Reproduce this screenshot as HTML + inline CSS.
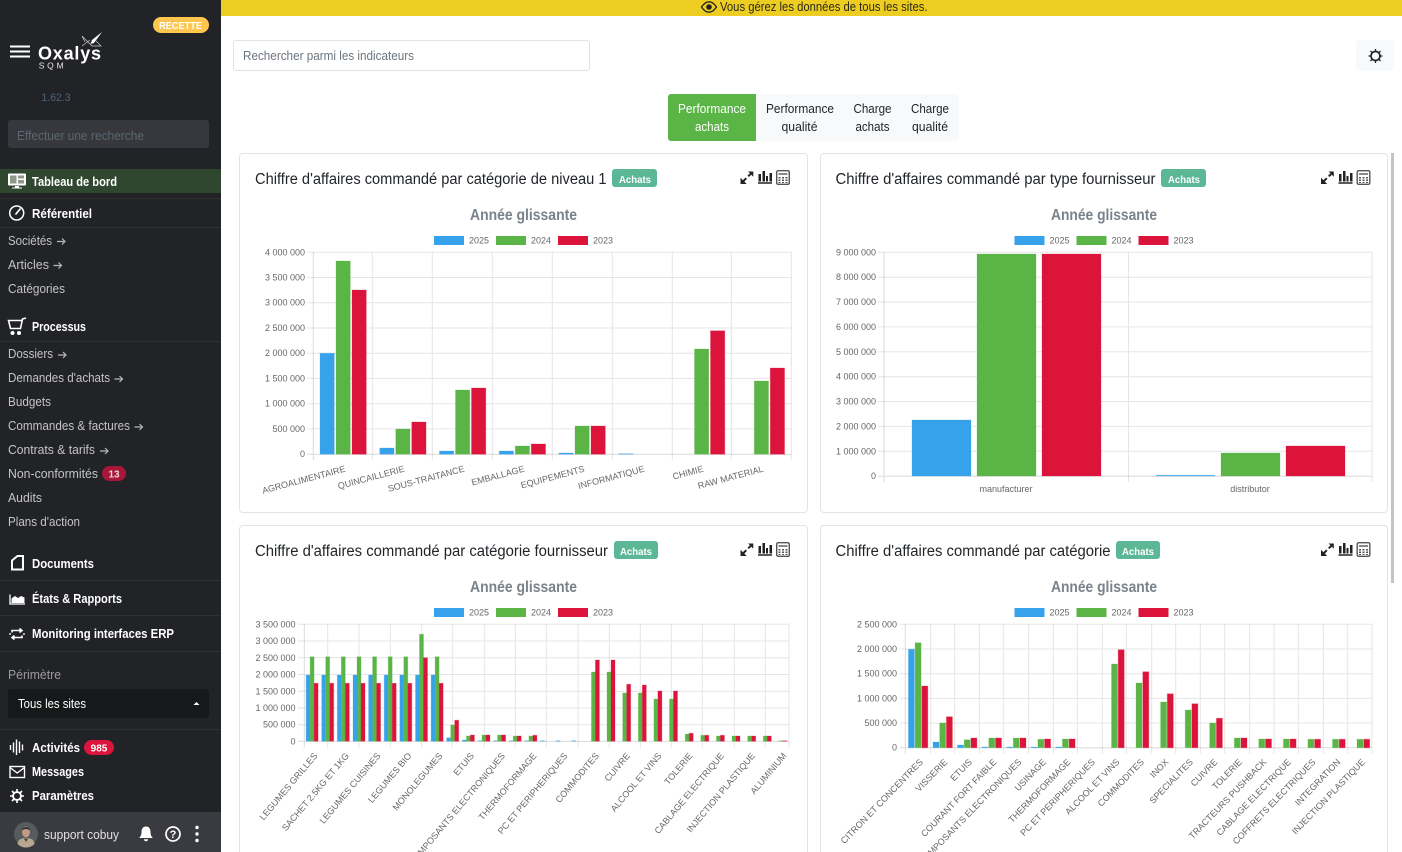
<!DOCTYPE html>
<html lang="fr"><head><meta charset="utf-8"><title>Oxalys SQM</title>
<style>
html,body{margin:0;padding:0;width:1402px;height:852px;overflow:hidden;background:#fff}
body{position:relative;font-family:"Liberation Sans",sans-serif}
.b{position:absolute;box-sizing:border-box}
svg{position:absolute;left:0;top:0}
.ct text{font-size:9px;fill:#666}
.e{text-anchor:end}
.gr{stroke:rgba(0,0,0,.1);stroke-width:1;fill:none}
.ax{stroke:rgba(0,0,0,.14);stroke-width:1;fill:none}
.bl{fill:#36a2eb;stroke:#36a2eb;stroke-opacity:.25;stroke-width:1}
.gn{fill:#5ab546;stroke:#5ab546;stroke-opacity:.25;stroke-width:1}
.rd{fill:#dc143c;stroke:#dc143c;stroke-opacity:.25;stroke-width:1}
.t{font-size:15.5px;fill:#212529}
.tb{font-size:10px;font-weight:bold;fill:#fff}
.st{font-size:16px;font-weight:bold;fill:#7a828b}
.h{font-size:12.5px;font-weight:bold;fill:#fff}
.i{font-size:12.5px;fill:#c4c4c4}
.tab{font-size:12.5px;fill:#212529}
.wi{stroke:#fff;fill:none}
</style></head><body>
<div class="b" style="left:0;top:0;width:221px;height:852px;background:#222327"></div>
<div class="b" style="left:221px;top:0;width:1181px;height:16px;background:#eecd22"></div>
<div class="b" style="left:153px;top:17px;width:56px;height:16px;background:#ffc64f;border-radius:8px"></div>
<div class="b" style="left:8px;top:120px;width:201px;height:28px;background:#37383e;border-radius:3px"></div>
<div class="b" style="left:0;top:169px;width:221px;height:24px;background:#2f472e"></div>
<div class="b" style="left:8px;top:689px;width:201px;height:29px;background:#17181a;border-radius:3px"></div>
<div class="b" style="left:0;top:812px;width:221px;height:40px;background:#3a3b40"></div>
<div class="b" style="left:233px;top:40px;width:357px;height:31px;border:1px solid #dfe3e7;border-radius:3px;background:#fff"></div>
<div class="b" style="left:1356px;top:40px;width:38px;height:31px;background:#f8f9fa;border-radius:4px"></div>
<div class="b" style="left:668px;top:94px;width:291px;height:47px;background:#f8f9fa;border-radius:3px"></div>
<div class="b" style="left:668px;top:94px;width:88px;height:47px;background:#5ab546;border-radius:3px 0 0 3px"></div>
<div class="b" style="left:239px;top:153px;width:569px;height:360px;border:1px solid #e2e4e7;border-radius:4px"></div>
<div class="b" style="left:820px;top:153px;width:568px;height:360px;border:1px solid #e2e4e7;border-radius:4px"></div>
<div class="b" style="left:239px;top:525px;width:569px;height:360px;border:1px solid #e2e4e7;border-radius:4px"></div>
<div class="b" style="left:820px;top:525px;width:568px;height:360px;border:1px solid #e2e4e7;border-radius:4px"></div>
<div class="b" style="left:1391px;top:153px;width:3px;height:430px;background:#c4c4c4"></div>
<div class="b" style="left:612px;top:169px;width:45px;height:18px;background:#5bb796;border-radius:3px"></div>
<div class="b" style="left:1161px;top:169px;width:45px;height:18px;background:#5bb796;border-radius:3px"></div>
<div class="b" style="left:614px;top:541px;width:44px;height:18px;background:#5bb796;border-radius:3px"></div>
<div class="b" style="left:1116px;top:541px;width:44px;height:18px;background:#5bb796;border-radius:3px"></div>

<svg width="1402" height="852" viewBox="0 0 1402 852" xmlns="http://www.w3.org/2000/svg">
<defs>
<path id="ar" d="M0 0H8M5 -3L8 0L5 3" fill="none" stroke="#b9b9b9" stroke-width="1.2"/>
<g id="ic">
<path d="M740.500 184V177.800L746.700 184ZM753.300 171.500V176.700L748.100 171.500Z" fill="#222"/>
<path d="M743.500 181L746.300 178.200M748.200 176.300L750.700 174" stroke="#222" stroke-width="2"/>
<path d="M758 183H772" stroke="#222" stroke-width="1.500"/>
<path d="M758.500 174h2.500v7.500h-2.500zM762.500 171h2.500v10.500h-2.500zM766 176h2v5.500h-2zM769.500 173h2.500v8.500h-2.500z" fill="#222"/>
<rect x="776.700" y="170.700" width="12.600" height="13.600" rx="1.500" fill="#fff" stroke="#555" stroke-width="1.400"/>
<path d="M778.500 173h9v2h-9z" fill="#888"/>
<path d="M778.500 177h2v1.500h-2zM782 177h2v1.500h-2zM785.500 177h2v1.500h-2zM778.500 179.500h2v1.500h-2zM782 179.500h2v1.500h-2zM785.500 179.500h2v1.500h-2zM778.500 182h2v1h-2zM782 182h2v1h-2zM785.500 182h2v1h-2z" fill="#555"/>
</g>
</defs>

<!-- Banner -->
<path d="M701.500 7C704 3.300 706.500 1.800 709 1.800S714 3.300 716.500 7C714 10.700 711.500 12.200 709 12.200S704 10.700 701.500 7Z" fill="none" stroke="#222" stroke-width="1.300"/>
<circle cx="709" cy="7" r="2.800" fill="#222"/>
<text x="720" y="11" font-size="12.500" fill="#2a2a1a" textLength="207.500" lengthAdjust="spacingAndGlyphs">Vous gérez les données de tous les sites.</text>

<!-- Logo -->
<text x="159" y="29" font-size="10" font-weight="bold" fill="#fff" textLength="43" lengthAdjust="spacingAndGlyphs">RECETTE</text>
<path d="M10 46.500H30M10 51.500H30M10 56.500H30" stroke="#fff" stroke-width="2"/>
<text x="38" y="59.500" font-size="18" font-weight="bold" fill="#fff" textLength="63" lengthAdjust="spacing">Oxalys</text>
<text x="38.700" y="68.300" font-size="8.500" fill="#e8e8e8" textLength="25" lengthAdjust="spacing">SQM</text>
<path d="M102 32L92 40L90.500 44L94 43Z" fill="#fff"/>
<path d="M82 36L92 46H101L96 41M82 46L90 40M82 36L85 42" fill="none" stroke="#cfcfcf" stroke-width=".7"/>
<text x="41.500" y="101" font-size="11" fill="#4f6378" textLength="29" lengthAdjust="spacingAndGlyphs">1.62.3</text>
<text x="17" y="140" font-size="12.500" fill="#5c6670" textLength="127" lengthAdjust="spacingAndGlyphs">Effectuer une recherche</text>

<!-- Sidebar separators -->
<path d="M0 198.500H221M0 227.500H221M0 341.500H221M0 580.500H221M0 615.500H221M0 651.500H221M0 729.500H221" stroke="#2f3034" stroke-width="1"/>

<!-- Sidebar icons -->
<rect x="8" y="173.500" width="18" height="12" rx="1" fill="#fff"/>
<path d="M10 175.500h6.500v8h-6.500zM18 175.500h6v3h-6zM18 180h6v3.500h-6z" fill="#8d9a8b"/>
<path d="M15 186h4v1.500h3v1h-10v-1h3z" fill="#fff"/>
<circle cx="16.700" cy="213" r="7" fill="none" stroke="#fff" stroke-width="1.500"/>
<path d="M15.500 214.500L20.500 208.500" stroke="#fff" stroke-width="1.700"/>
<path d="M26 318L22.500 319L20.500 328.500H10.500L8.500 320.500H21.500" fill="none" stroke="#fff" stroke-width="1.600"/>
<circle cx="12.500" cy="333" r="2" fill="#fff"/><circle cx="19" cy="333" r="2" fill="#fff"/>
<path d="M12 569.500V560.500L17.500 556H23V569.500Z" fill="none" stroke="#fff" stroke-width="2"/>
<path d="M10 594.500V604H25" fill="none" stroke="#fff" stroke-width="1.300"/>
<path d="M11.500 603V598.500L15 596L18 598L21 596L24.500 597.500V603Z" fill="#fff"/>
<path d="M12 632.500V630.500H21.500M19.500 628.500L22 630.500L19.500 632.500M22 635.500V637.500H12.500M14.500 635.500L12 637.500L14.500 639.500" fill="none" stroke="#fff" stroke-width="1.600"/>
<path d="M9 634H11M23 634H25" stroke="#fff" stroke-width="1.200"/>
<path d="M10.500 745V750M13.500 742.500V752.500M16.500 739.500V755M19.500 741.500V753M22.500 744.500V750.500" stroke="#fff" stroke-width="1.400"/>
<rect x="10" y="766.500" width="14.500" height="11" fill="none" stroke="#fff" stroke-width="1.400"/>
<path d="M10 767.500L17.200 773L24.500 767.500" fill="none" stroke="#fff" stroke-width="1.400"/>
<circle cx="17" cy="796" r="4" fill="none" stroke="#fff" stroke-width="1.800"/>
<path d="M17 789V803M10 796H24M12 791L22 801M22 791L12 801" stroke="#fff" stroke-width="1.600"/>
<circle cx="17" cy="796" r="3" fill="#222327"/>

<!-- Sidebar text -->
<text class="h" x="32" y="186" textLength="85" lengthAdjust="spacingAndGlyphs">Tableau de bord</text>
<text class="h" x="32" y="218" textLength="60" lengthAdjust="spacingAndGlyphs">Référentiel</text>
<text class="i" x="8" y="245" textLength="44" lengthAdjust="spacingAndGlyphs">Sociétés</text>
<use href="#ar" x="57" y="241.500"/>
<text class="i" x="8" y="269" textLength="41" lengthAdjust="spacingAndGlyphs">Articles</text>
<use href="#ar" x="53.500" y="265.500"/>
<text class="i" x="8" y="293" textLength="57" lengthAdjust="spacingAndGlyphs">Catégories</text>
<text class="h" x="32" y="331" textLength="54" lengthAdjust="spacingAndGlyphs">Processus</text>
<text class="i" x="8" y="358" textLength="45" lengthAdjust="spacingAndGlyphs">Dossiers</text>
<use href="#ar" x="58" y="355"/>
<text class="i" x="8" y="382" textLength="102" lengthAdjust="spacingAndGlyphs">Demandes d'achats</text>
<use href="#ar" x="114.500" y="379"/>
<text class="i" x="8" y="406" textLength="43" lengthAdjust="spacingAndGlyphs">Budgets</text>
<text class="i" x="8" y="430" textLength="122" lengthAdjust="spacingAndGlyphs">Commandes &amp; factures</text>
<use href="#ar" x="134.500" y="427"/>
<text class="i" x="8" y="454" textLength="87" lengthAdjust="spacingAndGlyphs">Contrats &amp; tarifs</text>
<use href="#ar" x="100" y="451"/>
<text class="i" x="8" y="478" textLength="90" lengthAdjust="spacingAndGlyphs">Non-conformités</text>
<rect x="102" y="466" width="24" height="15" rx="7.500" fill="#a81638"/>
<text x="114" y="477.500" font-size="10" font-weight="bold" fill="#f0d8dc" text-anchor="middle">13</text>
<text class="i" x="8" y="502" textLength="34" lengthAdjust="spacingAndGlyphs">Audits</text>
<text class="i" x="8" y="526" textLength="72" lengthAdjust="spacingAndGlyphs">Plans d'action</text>
<text class="h" x="32" y="568" textLength="62" lengthAdjust="spacingAndGlyphs">Documents</text>
<text class="h" x="32" y="603" textLength="90" lengthAdjust="spacingAndGlyphs">États &amp; Rapports</text>
<text class="h" x="32" y="638" textLength="142" lengthAdjust="spacingAndGlyphs">Monitoring interfaces ERP</text>
<text x="8" y="679" font-size="12.500" fill="#9b9b9b" textLength="53" lengthAdjust="spacingAndGlyphs">Périmètre</text>
<text x="18" y="708" font-size="12.500" fill="#fff" textLength="68" lengthAdjust="spacingAndGlyphs">Tous les sites</text>
<path d="M193.500 705L196.500 702L199.500 705Z" fill="#fff"/>
<text class="h" x="32" y="752" textLength="48" lengthAdjust="spacingAndGlyphs">Activités</text>
<rect x="84" y="740" width="30" height="15" rx="7.500" fill="#dc143c"/>
<text x="99" y="751.500" font-size="10" font-weight="bold" fill="#fff" text-anchor="middle">985</text>
<text class="h" x="32" y="776" textLength="52" lengthAdjust="spacingAndGlyphs">Messages</text>
<text class="h" x="32" y="800" textLength="62" lengthAdjust="spacingAndGlyphs">Paramètres</text>

<!-- Footer -->
<circle cx="26" cy="834" r="12" fill="#565b5e"/>
<path d="M17.500 844C18 839 22 838 26 838S34 839 34.500 844A12 12 0 0 1 17.500 844Z" fill="#b9a88e"/>
<ellipse cx="26" cy="832" rx="4" ry="5.500" fill="#c09a83"/>
<path d="M22 830.500C21.500 826 30.500 826 30 830.500C28 828.500 24 828.500 22 830.500Z" fill="#2f2d2c"/>
<path d="M24 838.500L26 842L28 838.500Z" fill="#3a3d42"/>
<text x="44" y="839" font-size="12.500" fill="#e2e2e2" textLength="75" lengthAdjust="spacingAndGlyphs">support cobuy</text>
<path d="M146 826.500C149.500 826.500 150.500 829.500 150.500 832C150.500 835 151.500 836.500 152.800 838H139.200C140.500 836.500 141.500 835 141.500 832C141.500 829.500 142.500 826.500 146 826.500Z" fill="#fff"/>
<path d="M144 839.200H148A2 2 0 0 1 144 839.200Z" fill="#fff"/>
<circle cx="173" cy="834" r="7" fill="none" stroke="#fff" stroke-width="1.700"/>
<text x="173" y="838" font-size="11" font-weight="bold" fill="#fff" text-anchor="middle">?</text>
<circle cx="197" cy="827.500" r="1.700" fill="#fff"/><circle cx="197" cy="834" r="1.700" fill="#fff"/><circle cx="197" cy="840.500" r="1.700" fill="#fff"/>

<!-- Top -->
<text x="243" y="60" font-size="12.500" fill="#6c757d" textLength="171" lengthAdjust="spacingAndGlyphs">Rechercher parmi les indicateurs</text>
<circle cx="1375.500" cy="56" r="4.500" fill="none" stroke="#212529" stroke-width="1.700"/>
<path d="M1375.500 49V51.500M1375.500 60.500V63M1368.500 56H1371M1380 56H1382.500M1370.500 51L1372.300 52.800M1378.700 59.200L1380.500 61M1380.500 51L1378.700 52.800M1372.300 59.200L1370.500 61" stroke="#212529" stroke-width="1.300"/>

<!-- Tabs -->
<g class="tab">
<text x="678" y="113" style="fill:#fff" textLength="68" lengthAdjust="spacingAndGlyphs">Performance</text>
<text x="695" y="131" style="fill:#fff" textLength="34" lengthAdjust="spacingAndGlyphs">achats</text>
<text x="766" y="113" textLength="68" lengthAdjust="spacingAndGlyphs">Performance</text>
<text x="781.500" y="131" textLength="36" lengthAdjust="spacingAndGlyphs">qualité</text>
<text x="853.500" y="113" textLength="38" lengthAdjust="spacingAndGlyphs">Charge</text>
<text x="855.500" y="131" textLength="34" lengthAdjust="spacingAndGlyphs">achats</text>
<text x="911" y="113" textLength="38" lengthAdjust="spacingAndGlyphs">Charge</text>
<text x="912" y="131" textLength="36" lengthAdjust="spacingAndGlyphs">qualité</text>
</g>

<!-- Card heads -->
<text class="t" x="255" y="184" textLength="351.500" lengthAdjust="spacingAndGlyphs">Chiffre d'affaires commandé par catégorie de niveau 1</text>
<text class="tb" x="619" y="183" textLength="32" lengthAdjust="spacingAndGlyphs">Achats</text>
<text class="t" x="835.500" y="184" textLength="320" lengthAdjust="spacingAndGlyphs">Chiffre d'affaires commandé par type fournisseur</text>
<text class="tb" x="1168" y="183" textLength="32" lengthAdjust="spacingAndGlyphs">Achats</text>
<text class="t" x="255" y="556" textLength="353" lengthAdjust="spacingAndGlyphs">Chiffre d'affaires commandé par catégorie fournisseur</text>
<text class="tb" x="620" y="555" textLength="32" lengthAdjust="spacingAndGlyphs">Achats</text>
<text class="t" x="835.500" y="556" textLength="275" lengthAdjust="spacingAndGlyphs">Chiffre d'affaires commandé par catégorie</text>
<text class="tb" x="1122" y="555" textLength="32" lengthAdjust="spacingAndGlyphs">Achats</text>
<use href="#ic"/><use href="#ic" x="580.500"/><use href="#ic" y="372"/><use href="#ic" x="580.500" y="372"/>

<text class="st" x="470" y="220" textLength="107" lengthAdjust="spacingAndGlyphs">Année glissante</text>
<text class="st" x="1051" y="220" textLength="106" lengthAdjust="spacingAndGlyphs">Année glissante</text>
<text class="st" x="470" y="592" textLength="107" lengthAdjust="spacingAndGlyphs">Année glissante</text>
<text class="st" x="1051" y="592" textLength="106" lengthAdjust="spacingAndGlyphs">Année glissante</text>

<g class="ct">
<!-- Legends -->
<path class="bl" style="stroke:none" d="M434 236h30v9h-30zM1014.500 236h30v9h-30zM434 608h30v9h-30zM1014.500 608h30v9h-30z"/>
<path class="gn" style="stroke:none" d="M496 236h30v9h-30zM1076.500 236h30v9h-30zM496 608h30v9h-30zM1076.500 608h30v9h-30z"/>
<path class="rd" style="stroke:none" d="M558 236h30v9h-30zM1138.500 236h30v9h-30zM558 608h30v9h-30zM1138.500 608h30v9h-30z"/>
<text x="469" y="243.500">2025</text><text x="531" y="243.500">2024</text><text x="593" y="243.500">2023</text>
<text x="1049.500" y="243.500">2025</text><text x="1111.500" y="243.500">2024</text><text x="1173.500" y="243.500">2023</text>
<text x="469" y="615.500">2025</text><text x="531" y="615.500">2024</text><text x="593" y="615.500">2023</text>
<text x="1049.500" y="615.500">2025</text><text x="1111.500" y="615.500">2024</text><text x="1173.500" y="615.500">2023</text>

<!-- Chart 1 -->
<path class="gr" d="M307 252.300H791.500M307 277.500H791.500M307 302.700H791.500M307 328H791.500M307 353.200H791.500M307 378.400H791.500M307 403.700H791.500M307 428.900H791.500M372.300 252V460M432.300 252V460M492.300 252V460M552.300 252V460M612.300 252V460M672.300 252V460M731.300 252V460M791.300 252V460"/>
<path class="ax" d="M313.300 252V460M307 454.300H791.500"/>
<path class="bl" d="M320 353.300h14.300V454.300h-14.300zM379.750 448h14.300V454.300h-14.300zM439.500 451h14.300V454.300h-14.300zM499.250 451h14.300V454.300h-14.300zM559 453h14.300V454.300h-14.300zM618.750 453.800h14.300V454.300h-14.300z"/>
<path class="gn" d="M336 261h14.300V454.300h-14.300zM395.750 429h14.300V454.300h-14.300zM455.500 390h14.300V454.300h-14.300zM515.250 446h14.300V454.300h-14.300zM575 426h14.300V454.300h-14.300zM694.500 349h14.300V454.300h-14.300zM754.250 381h14.300V454.300h-14.300z"/>
<path class="rd" d="M352 290h14.300V454.300h-14.300zM411.750 422h14.300V454.300h-14.300zM471.500 388h14.300V454.300h-14.300zM531.250 444h14.300V454.300h-14.300zM591 426h14.300V454.300h-14.300zM710.500 330.700h14.300V454.300h-14.300zM770.250 368h14.300V454.300h-14.300z"/>
<g class="e">
<text x="305" y="255.300">4 000 000</text><text x="305" y="280.500">3 500 000</text><text x="305" y="305.700">3 000 000</text><text x="305" y="331">2 500 000</text><text x="305" y="356.200">2 000 000</text><text x="305" y="381.400">1 500 000</text><text x="305" y="406.700">1 000 000</text><text x="305" y="431.900">500 000</text><text x="305" y="457.200">0</text>
<text x="346" y="471.500" transform="rotate(-15 346 471.500)">AGROALIMENTAIRE</text>
<text x="405" y="471.500" transform="rotate(-15 405 471.500)">QUINCAILLERIE</text>
<text x="465" y="471.500" transform="rotate(-15 465 471.500)">SOUS-TRAITANCE</text>
<text x="525" y="471.500" transform="rotate(-15 525 471.500)">EMBALLAGE</text>
<text x="585" y="471.500" transform="rotate(-15 585 471.500)">EQUIPEMENTS</text>
<text x="645" y="471.500" transform="rotate(-15 645 471.500)">INFORMATIQUE</text>
<text x="704" y="471.500" transform="rotate(-15 704 471.500)">CHIMIE</text>
<text x="764" y="471.500" transform="rotate(-15 764 471.500)">RAW MATERIAL</text>
</g>

<!-- Chart 2 -->
<path class="gr" d="M878 252.300H1372M878 277.200H1372M878 302H1372M878 326.900H1372M878 351.800H1372M878 376.700H1372M878 401.500H1372M878 426.400H1372M878 451.300H1372M1128.500 252V482M1372 252V482"/>
<path class="ax" d="M884 252V482M878 476.200H1372"/>
<path class="bl" d="M912 420h59V476h-59zM1156 475.300h59V476h-59z"/>
<path class="gn" d="M977 254h59V476h-59zM1221 453h59V476h-59z"/>
<path class="rd" d="M1042 254h59V476h-59zM1286 446h59V476h-59z"/>
<g class="e">
<text x="876" y="255.300">9 000 000</text><text x="876" y="280.200">8 000 000</text><text x="876" y="305">7 000 000</text><text x="876" y="329.900">6 000 000</text><text x="876" y="354.800">5 000 000</text><text x="876" y="379.700">4 000 000</text><text x="876" y="404.500">3 000 000</text><text x="876" y="429.400">2 000 000</text><text x="876" y="454.300">1 000 000</text><text x="876" y="479.200">0</text>
</g>
<text x="1006" y="492" text-anchor="middle">manufacturer</text>
<text x="1250" y="492" text-anchor="middle">distributor</text>

<!-- Chart 3 -->
<path class="gr" d="M298 624.300H789M298 641H789M298 657.800H789M298 674.500H789M298 691.300H789M298 708H789M298 724.700H789M327.700 624V747.500M359 624V747.500M390.300 624V747.500M421.700 624V747.500M452.300 624V747.500M484.300 624V747.500M515.300 624V747.500M546.300 624V747.500M578 624V747.500M609.300 624V747.500M640.300 624V747.500M671.300 624V747.500M702.300 624V747.500M734.300 624V747.500M765.300 624V747.500M789 624V747.500"/>
<path class="ax" d="M304.300 624V747.500M298 741.400H789"/>
<path class="bl" d="M306.100 675h4V741.300h-4zM321.700 675h4V741.300h-4zM337.300 675h4V741.300h-4zM353 675h4V741.300h-4zM368.600 675h4V741.300h-4zM384.200 675h4V741.300h-4zM399.800 675h4V741.300h-4zM415.500 675h4V741.300h-4zM431.100 675h4V741.300h-4zM446.700 737.700h4V741.300h-4zM462.400 740h4V741.300h-4zM478 740.800h4V741.300h-4zM493.600 740.800h4V741.300h-4zM509.200 740.800h4V741.300h-4zM524.900 740.800h4V741.300h-4zM540.500 740.800h4V741.300h-4zM556.100 740.800h4V741.300h-4zM571.800 740.800h4V741.300h-4z"/>
<path class="gn" d="M310.100 656.700h4V741.300h-4zM325.700 656.700h4V741.300h-4zM341.300 656.700h4V741.300h-4zM357 656.700h4V741.300h-4zM372.600 656.700h4V741.300h-4zM388.200 656.700h4V741.300h-4zM403.800 656.700h4V741.300h-4zM419.500 634.300h4V741.300h-4zM435.100 656.700h4V741.300h-4zM450.700 725h4V741.300h-4zM466.400 736h4V741.300h-4zM482 735h4V741.300h-4zM497.600 735h4V741.300h-4zM513.200 736h4V741.300h-4zM528.900 736h4V741.300h-4zM591.400 672h4V741.300h-4zM607 672h4V741.300h-4zM622.700 693h4V741.300h-4zM638.300 693h4V741.300h-4zM653.900 699h4V741.300h-4zM669.500 699h4V741.300h-4zM685.200 734h4V741.300h-4zM700.800 735.300h4V741.300h-4zM716.400 736h4V741.300h-4zM732 736h4V741.300h-4zM747.700 736h4V741.300h-4zM763.300 736h4V741.300h-4zM778.900 740.800h4V741.300h-4z"/>
<path class="rd" d="M314.100 683.300h4V741.300h-4zM329.700 683.300h4V741.300h-4zM345.300 683.300h4V741.300h-4zM361 683.300h4V741.300h-4zM376.600 683.300h4V741.300h-4zM392.200 683.300h4V741.300h-4zM407.800 683.300h4V741.300h-4zM423.500 657.700h4V741.300h-4zM439.100 683.300h4V741.300h-4zM454.700 720.300h4V741.300h-4zM470.400 735h4V741.300h-4zM486 735h4V741.300h-4zM501.600 735h4V741.300h-4zM517.200 736h4V741.300h-4zM532.900 735.300h4V741.300h-4zM595.400 660h4V741.300h-4zM611 660h4V741.300h-4zM626.700 684.300h4V741.300h-4zM642.300 685h4V741.300h-4zM657.900 691h4V741.300h-4zM673.500 691h4V741.300h-4zM689.200 733.300h4V741.300h-4zM704.800 735.300h4V741.300h-4zM720.400 735.300h4V741.300h-4zM736 736h4V741.300h-4zM751.700 736h4V741.300h-4zM767.300 736h4V741.300h-4zM782.900 740.800h4V741.300h-4z"/>
<g class="e">
<text x="295.500" y="627.300">3 500 000</text><text x="295.500" y="644">3 000 000</text><text x="295.500" y="660.800">2 500 000</text><text x="295.500" y="677.500">2 000 000</text><text x="295.500" y="694.300">1 500 000</text><text x="295.500" y="711">1 000 000</text><text x="295.500" y="727.700">500 000</text><text x="295.500" y="744.400">0</text>
<text x="318" y="756" transform="rotate(-50 318 756)">LEGUMES GRILLES</text>
<text x="349.500" y="756" transform="rotate(-50 349.500 756)">SACHET 2.5KG ET 1KG</text>
<text x="381" y="756" transform="rotate(-50 381 756)">LEGUMES CUISINES</text>
<text x="412" y="756" transform="rotate(-50 412 756)">LEGUMES BIO</text>
<text x="443" y="756" transform="rotate(-50 443 756)">MONOLEGUMES</text>
<text x="474.500" y="756" transform="rotate(-50 474.500 756)">ETUIS</text>
<text x="505.500" y="756" transform="rotate(-50 505.500 756)">COMPOSANTS ELECTRONIQUES</text>
<text x="537" y="756" transform="rotate(-50 537 756)">THERMOFORMAGE</text>
<text x="568" y="756" transform="rotate(-50 568 756)">PC ET PERIPHERIQUES</text>
<text x="599.500" y="756" transform="rotate(-50 599.500 756)">COMMODITES</text>
<text x="630.500" y="756" transform="rotate(-50 630.500 756)">CUIVRE</text>
<text x="662" y="756" transform="rotate(-50 662 756)">ALCOOL ET VINS</text>
<text x="693" y="756" transform="rotate(-50 693 756)">TOLERIE</text>
<text x="724.500" y="756" transform="rotate(-50 724.500 756)">CABLAGE ELECTRIQUE</text>
<text x="755.500" y="756" transform="rotate(-50 755.500 756)">INJECTION PLASTIQUE</text>
<text x="787" y="756" transform="rotate(-50 787 756)">ALUMINIUM</text>
</g>

<!-- Chart 4 -->
<path class="gr" d="M900 624.300H1372M900 649H1372M900 673.700H1372M900 698.400H1372M900 723H1372M930.700 624V753.500M954.700 624V753.500M979.300 624V753.500M1003.700 624V753.500M1028.700 624V753.500M1053.300 624V753.500M1077.300 624V753.500M1102.300 624V753.500M1126.300 624V753.500M1151.700 624V753.500M1175.700 624V753.500M1200.300 624V753.500M1224.700 624V753.500M1249.700 624V753.500M1274 624V753.500M1298.300 624V753.500M1323.300 624V753.500M1347.700 624V753.500M1372 624V753.500"/>
<path class="ax" d="M905.300 624V753.500M900 747.700H1372"/>
<path class="bl" d="M908.400 649.300h6V747.700h-6zM933 742h6V747.700h-6zM957.500 745h6V747.700h-6zM982 747h6V747.700h-6zM1006.600 747h6V747.700h-6zM1031.200 747h6V747.700h-6zM1055.700 747h6V747.700h-6z"/>
<path class="gn" d="M915.100 642.700h6V747.700h-6zM939.700 723h6V747.700h-6zM964.200 739.700h6V747.700h-6zM988.800 738h6V747.700h-6zM1013.300 738h6V747.700h-6zM1037.900 739.300h6V747.700h-6zM1062.400 739h6V747.700h-6zM1111.500 664h6V747.700h-6zM1136 683h6V747.700h-6zM1160.600 702h6V747.700h-6zM1185.200 710h6V747.700h-6zM1209.700 723h6V747.700h-6zM1234.300 738h6V747.700h-6zM1258.800 739h6V747.700h-6zM1283.400 739h6V747.700h-6zM1307.900 739.300h6V747.700h-6zM1332.500 739.300h6V747.700h-6zM1357 739.300h6V747.700h-6z"/>
<path class="rd" d="M921.800 686h6V747.700h-6zM946.400 716.700h6V747.700h-6zM970.900 738h6V747.700h-6zM995.500 738h6V747.700h-6zM1020 738h6V747.700h-6zM1044.600 739h6V747.700h-6zM1069.100 739h6V747.700h-6zM1118.200 649.700h6V747.700h-6zM1142.800 671.700h6V747.700h-6zM1167.300 693.700h6V747.700h-6zM1191.900 703.700h6V747.700h-6zM1216.400 718.300h6V747.700h-6zM1241 738h6V747.700h-6zM1265.500 739h6V747.700h-6zM1290.100 739h6V747.700h-6zM1314.600 739.300h6V747.700h-6zM1339.200 739.300h6V747.700h-6zM1363.700 739.300h6V747.700h-6z"/>
<g class="e">
<text x="897" y="627.300">2 500 000</text><text x="897" y="652">2 000 000</text><text x="897" y="676.700">1 500 000</text><text x="897" y="701.400">1 000 000</text><text x="897" y="726">500 000</text><text x="897" y="750.700">0</text>
<text x="923.500" y="762.500" transform="rotate(-46 923.500 762.500)">CITRON ET CONCENTRES</text>
<text x="948" y="762.500" transform="rotate(-46 948 762.500)">VISSERIE</text>
<text x="972.500" y="762.500" transform="rotate(-46 972.500 762.500)">ETUIS</text>
<text x="997" y="762.500" transform="rotate(-46 997 762.500)">COURANT FORT FAIBLE</text>
<text x="1022" y="762.500" transform="rotate(-46 1022 762.500)">COMPOSANTS ELECTRONIQUES</text>
<text x="1046.500" y="762.500" transform="rotate(-46 1046.500 762.500)">USINAGE</text>
<text x="1071" y="762.500" transform="rotate(-46 1071 762.500)">THERMOFORMAGE</text>
<text x="1095.500" y="762.500" transform="rotate(-46 1095.500 762.500)">PC ET PERIPHERIQUES</text>
<text x="1120" y="762.500" transform="rotate(-46 1120 762.500)">ALCOOL ET VINS</text>
<text x="1144.500" y="762.500" transform="rotate(-46 1144.500 762.500)">COMMODITES</text>
<text x="1169" y="762.500" transform="rotate(-46 1169 762.500)">INOX</text>
<text x="1193.500" y="762.500" transform="rotate(-46 1193.500 762.500)">SPECIALITES</text>
<text x="1218" y="762.500" transform="rotate(-46 1218 762.500)">CUIVRE</text>
<text x="1242.500" y="762.500" transform="rotate(-46 1242.500 762.500)">TOLERIE</text>
<text x="1267" y="762.500" transform="rotate(-46 1267 762.500)">TRACTEURS PUSHBACK</text>
<text x="1291.500" y="762.500" transform="rotate(-46 1291.500 762.500)">CABLAGE ELECTRIQUE</text>
<text x="1316" y="762.500" transform="rotate(-46 1316 762.500)">COFFRETS ELECTRIQUES</text>
<text x="1341" y="762.500" transform="rotate(-46 1341 762.500)">INTEGRATION</text>
<text x="1365.500" y="762.500" transform="rotate(-46 1365.500 762.500)">INJECTION PLASTIQUE</text>
</g>
</g>
</svg>
</body></html>
